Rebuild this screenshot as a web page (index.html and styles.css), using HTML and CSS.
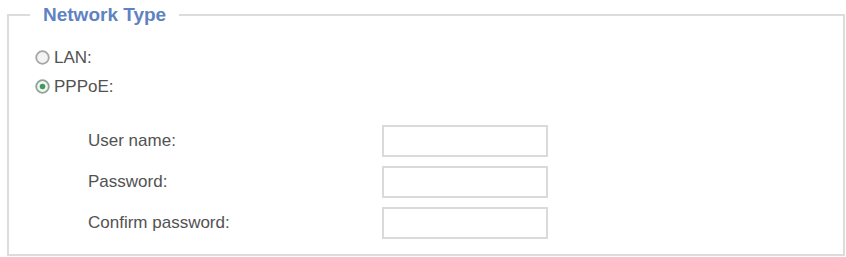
FILE: index.html
```html
<!DOCTYPE html>
<html>
<head>
<meta charset="utf-8">
<link rel="stylesheet" href="styles.css">
</head>
<body>
<fieldset class="panel">
  <legend class="panel-title">Network Type</legend>
  <div class="options">
    <label class="radio-row">
      <svg class="radio" width="15" height="15" viewBox="0 0 15 15">
        <circle cx="7.5" cy="7.5" r="6.3" fill="#f3f3f3" stroke="#a6a6a6" stroke-width="1.8"/>
      </svg>
      <span>LAN:</span>
    </label>
    <label class="radio-row">
      <svg class="radio" width="15" height="15" viewBox="0 0 15 15">
        <circle cx="7.5" cy="7.5" r="6.3" fill="#f3f6f3" stroke="#8ca493" stroke-width="1.8"/>
        <circle cx="7.5" cy="7.5" r="2.8" fill="#3f9a5c"/>
      </svg>
      <span>PPPoE:</span>
    </label>
    <div class="fields">
      <div class="field"><span class="field-label">User name:</span><span class="input"></span></div>
      <div class="field"><span class="field-label">Password:</span><span class="input"></span></div>
      <div class="field"><span class="field-label">Confirm password:</span><span class="input"></span></div>
    </div>
  </div>
</fieldset>
</body>
</html>
```
FILE: styles.css
```css
html, body {
  margin: 0;
  padding: 0;
  background: #ffffff;
}
body {
  font-family: "Liberation Sans", Arial, sans-serif;
  font-size: 17px;
  color: #525252;
}
.panel {
  box-sizing: border-box;
  width: 838px;
  height: 252px;
  margin: 4px 0 0 7px;
  padding: 0;
  border: 2px solid #dcdcdc;
  min-width: 0;
}
.panel-title {
  margin-left: 21px;
  padding: 0 13px;
  font-size: 19px;
  line-height: 21px;
  font-weight: bold;
  color: #5f82c2;
}
.options {
  display: flex;
  flex-direction: column;
  padding: 18px 0 0 26px;
}
.radio-row {
  display: flex;
  align-items: center;
  gap: 4px;
  height: 29px;
}
.radio {
  display: block;
  flex: none;
}
.fields {
  display: flex;
  flex-direction: column;
  gap: 9px;
  margin-top: 24px;
  padding-left: 53px;
}
.field {
  display: flex;
  align-items: center;
  height: 32px;
}
.field-label {
  width: 294px;
  flex: none;
}
.input {
  box-sizing: border-box;
  width: 166px;
  height: 32px;
  border: 2px solid #dadada;
  background: #ffffff;
}
```
